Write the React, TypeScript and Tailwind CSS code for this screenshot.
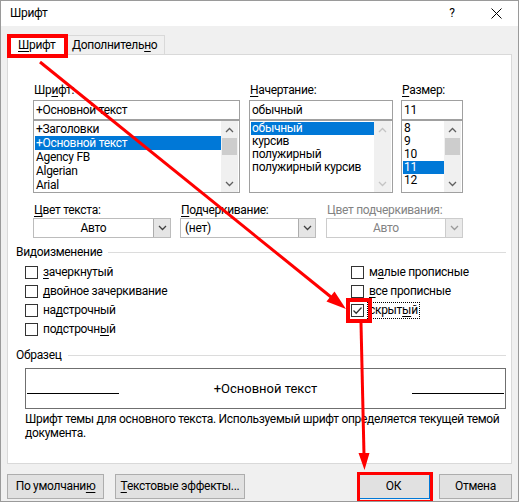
import React from "react";

const Chevron = ({ dir, color }: { dir: "up" | "down"; color: string }) => (
  <svg width="9" height="6" viewBox="0 0 9 6">
    <path
      d={dir === "up" ? "M1 5 L4.5 1.5 L8 5" : "M1 1 L4.5 4.5 L8 1"}
      fill="none"
      stroke={color}
      strokeWidth="1.3"
    />
  </svg>
);

function Scrollbar({ thumb, disabled }: { thumb: boolean; disabled?: boolean }) {
  const c = disabled ? "#c4c4c4" : "#606060";
  return (
    <div className="w-[17px] h-full bg-[#f0f0f0] flex flex-col">
      <div className="h-[17px] flex items-center justify-center">
        <Chevron dir="up" color={c} />
      </div>
      {thumb ? <div className="mx-[1px] h-[17px] bg-[#cdcdcd]" /> : null}
      <div className="flex-1" />
      <div className="h-[17px] flex items-center justify-center">
        <Chevron dir="down" color={c} />
      </div>
    </div>
  );
}

function ListBox({
  items,
  selected,
  itemH,
  thumb,
  disabledScroll,
}: {
  items: string[];
  selected: number;
  itemH: string;
  thumb: boolean;
  disabledScroll?: boolean;
}) {
  return (
    <div className="h-[73px] border border-[#a0a0a0] flex bg-white">
      <div className="flex-1 pl-[1px] pt-[1px] overflow-hidden">
        {items.map((it, i) => (
          <div
            key={it}
            className={
              (i === selected ? "bg-[#0078d7] text-white " : "text-black ") +
              itemH +
              " pl-[1px] whitespace-nowrap flex items-center"
            }
          >
            {it}
          </div>
        ))}
      </div>
      <Scrollbar thumb={thumb} disabled={disabledScroll} />
      <div className="w-[1px]" />
    </div>
  );
}

function Combo({
  value,
  center,
  disabled,
  w,
}: {
  value: string;
  center?: boolean;
  disabled?: boolean;
  w: string;
}) {
  return (
    <div
      className={
        w +
        " h-[20px] flex border " +
        (disabled ? "border-[#cccccc] text-[#838383]" : "border-[#bcbcbc] text-black")
      }
    >
      <div
        className={
          "flex-1 flex items-center " + (center ? "justify-center" : "pl-[4px]")
        }
      >
        {value}
      </div>
      <div
        className={
          "w-[17px] flex items-center justify-center border-l " +
          (disabled ? "bg-[#eaeaea] border-[#cccccc]" : "bg-[#e5e5e5] border-[#adadad]")
        }
      >
        <Chevron dir="down" color={disabled ? "#9a9a9a" : "#404040"} />
      </div>
    </div>
  );
}

function CheckBox({ checked }: { checked?: boolean }) {
  return (
    <div className="w-[13px] h-[13px] border border-[#333333] bg-white flex items-center justify-center">
      {checked ? (
        <svg width="11" height="11" viewBox="0 0 11 11">
          <path d="M1.5 5.5 L4.2 8.2 L9.5 2.5" fill="none" stroke="#333333" strokeWidth="1.3" />
        </svg>
      ) : null}
    </div>
  );
}

function CheckRow({ label, checked, focus }: { label: React.ReactNode; checked?: boolean; focus?: boolean }) {
  return (
    <div className="h-[19px] flex items-center">
      <CheckBox checked={checked} />
      <div
        className={
          "ml-[3px] h-[17px] flex items-center px-[1px] " +
          (focus ? "border border-dotted border-black" : "border border-transparent")
        }
      >
        {label}
      </div>
    </div>
  );
}

function Header({ text }: { text: string }) {
  return (
    <div className="h-[15px] flex items-center">
      <span className="whitespace-nowrap">{text}</span>
      <div className="flex-1 h-px bg-[#dcdcdc] ml-[6px]" />
    </div>
  );
}

function Button({ children, w, def }: { children: React.ReactNode; w: string; def?: boolean }) {
  return (
    <div
      className={
        w +
        " h-[25px] flex items-center justify-center bg-[#e1e1e1] border " +
        (def ? "border-[#0078d7]" : "border-[#adadad]")
      }
    >
      {children}
    </div>
  );
}

export default function App() {
  return (
    <div className="relative w-[519px] h-[502px] bg-[#f0f0f0] border border-[#9a9a9a] font-['Roboto',sans-serif] text-[12px] leading-[15px] tracking-[-0.3px] text-black overflow-hidden">
      {/* title bar */}
      <div className="h-[25px] bg-white flex items-center">
        <div className="pl-[9px] flex-1">Шрифт</div>
        <div className="w-[20px] text-center mr-[29px]">?</div>
        <svg width="11" height="11" viewBox="0 0 11 11" className="mr-[16px]">
          <path d="M0.5 0.5 L10.5 10.5 M10.5 0.5 L0.5 10.5" stroke="#000" strokeWidth="1" />
        </svg>
      </div>

      {/* tabs */}
      <div className="flex items-end ml-[6px] mt-[8px] h-[20px]">
        <div className="relative z-10 w-[59px] h-[21px] -mb-px bg-white border border-[#d9d9d9] border-b-0 flex items-center pl-[10px]">
          <span className="underline underline-offset-2">Ш</span>рифт
        </div>
        <div className="w-[99px] h-[19px] border border-l-0 border-[#d9d9d9] border-b-0 bg-[#f0f0f0] flex items-center pl-[6px]">
          Дополнитель<span className="underline underline-offset-2">н</span>о
        </div>
      </div>

      {/* panel */}
      <div className="ml-[6px] w-[505px] h-[410px] bg-white border border-[#d9d9d9] flex flex-col">
        {/* row 1 */}
        <div className="flex pl-[25px] pt-[28px]">
          <div className="w-[207px] flex flex-col">
            <div className="h-[15px] mb-[2px] pl-[1px]">
              Шр<span className="underline underline-offset-2">и</span>фт:
            </div>
            <div className="h-[20px] border border-[#a0a0a0] flex items-center pl-[2px]">+Основной текст</div>
            <ListBox
              items={["+Заголовки", "+Основной текст", "Agency FB", "Algerian", "Arial"]}
              selected={1}
              itemH="h-[14px] leading-[14px]"
              thumb
            />
          </div>
          <div className="w-[144px] ml-[9px] flex flex-col">
            <div className="h-[15px] mb-[2px] pl-[1px]">
              <span className="underline underline-offset-2">Н</span>ачертание:
            </div>
            <div className="h-[20px] border border-[#a0a0a0] flex items-center pl-[2px]">обычный</div>
            <ListBox
              items={["обычный", "курсив", "полужирный", "полужирный курсив"]}
              selected={0}
              itemH="h-[13px] leading-[13px]"
              thumb={false}
              disabledScroll
            />
          </div>
          <div className="w-[62px] ml-[8px] flex flex-col">
            <div className="h-[15px] mb-[2px] pl-[1px]">
              <span className="underline underline-offset-2">Р</span>азмер:
            </div>
            <div className="h-[20px] border border-[#a0a0a0] flex items-center pl-[2px]">11</div>
            <ListBox
              items={["8", "9", "10", "11", "12"]}
              selected={3}
              itemH="h-[13px] leading-[13px]"
              thumb
            />
          </div>
        </div>

        {/* row 2 */}
        <div className="flex pl-[25px] mt-[10px]">
          <div className="flex flex-col">
            <div className="h-[15px] pl-[1px]">
              <span className="underline underline-offset-2">Ц</span>вет текста:
            </div>
            <Combo value="Авто" center w="w-[138px]" />
          </div>
          <div className="flex flex-col ml-[9px]">
            <div className="h-[15px] pl-[1px]">
              <span className="underline underline-offset-2">П</span>одчеркивание:
            </div>
            <Combo value="(нет)" w="w-[136px]" />
          </div>
          <div className="flex flex-col ml-[10px]">
            <div className="h-[15px] pl-[1px] text-[#838383]">Цвет подчеркивания:</div>
            <Combo value="Авто" center disabled w="w-[137px]" />
          </div>
        </div>

        {/* effects */}
        <div className="ml-[8px] mr-[5px] mt-[7px] flex flex-col">
          <Header text="Видоизменение" />
          <div className="flex mt-[3px]">
            <div className="w-[335px] pl-[9px] flex flex-col">
              <CheckRow label={<><span className="underline underline-offset-2">з</span>ачеркнутый</>} />
              <CheckRow label={<><span className="underline underline-offset-2">д</span>войное зачеркивание</>} />
              <CheckRow label={<>на<span className="underline underline-offset-2">д</span>строчный</>} />
              <CheckRow label={<>подстрочн<span className="underline underline-offset-2">ы</span>й</>} />
            </div>
            <div className="flex flex-col">
              <CheckRow label={<>м<span className="underline underline-offset-2">а</span>лые прописные</>} />
              <CheckRow label={<><span className="underline underline-offset-2">в</span>се прописные</>} />
              <CheckRow checked focus label={<>скрыт<span className="underline underline-offset-2">ы</span>й</>} />
            </div>
          </div>

          <div className="mt-[9px]">
            <Header text="Образец" />
          </div>
          <div className="ml-[9px] mt-[5px] h-[41px] border border-[#6f6f6f] flex items-center px-[1px]">
            <div className="w-[92px] h-px bg-black mt-[10px]" />
            <div className="flex-1 text-center text-[13px] tracking-normal">+Основной текст</div>
            <div className="w-[92px] h-px bg-black mt-[10px]" />
          </div>
          <div className="ml-[9px] mt-[3px] leading-[14px] whitespace-nowrap">
            Шрифт темы для основного текста. Используемый шрифт определяется текущей темой
            <br />
            документа.
          </div>
        </div>
      </div>

      {/* buttons */}
      <div className="flex ml-[6px] mr-[6px] mt-[10px]">
        <Button w="w-[97px]">
          <span>
            По умолчани<span className="underline underline-offset-2">ю</span>
          </span>
        </Button>
        <div className="ml-[11px]">
          <Button w="w-[130px]">
            <span>
              <span className="underline underline-offset-2">Т</span>екстовые эффекты...
            </span>
          </Button>
        </div>
        <div className="flex-1" />
        <Button w="w-[73px]" def>
          ОК
        </Button>
        <div className="ml-[9px]">
          <Button w="w-[73px]">Отмена</Button>
        </div>
      </div>

      {/* annotations */}
      <div className="absolute z-20 left-[6px] top-[33px] w-[61px] h-[24px] border-4 border-[#ff0000] pointer-events-none" />
      <div className="absolute z-20 left-[345px] top-[297px] w-[26px] h-[25px] border-4 border-[#ff0000] pointer-events-none" />
      <div className="absolute z-20 left-[356px] top-[471px] w-[76px] h-[31px] border-[3px] border-[#ff0000] pointer-events-none" />
      <svg className="absolute z-20 left-0 top-0 pointer-events-none" width="519" height="502" viewBox="0 0 519 502">
        <line x1="39" y1="61" x2="330" y2="296" stroke="#ff0000" strokeWidth="3" />
        <polygon points="345,308 325.5,300.5 333.5,290.5" fill="#ff0000" />
        <line x1="360" y1="322" x2="363" y2="454" stroke="#ff0000" strokeWidth="3" />
        <polygon points="357.5,452 368.5,452 363.5,469" fill="#ff0000" />
      </svg>
    </div>
  );
}
